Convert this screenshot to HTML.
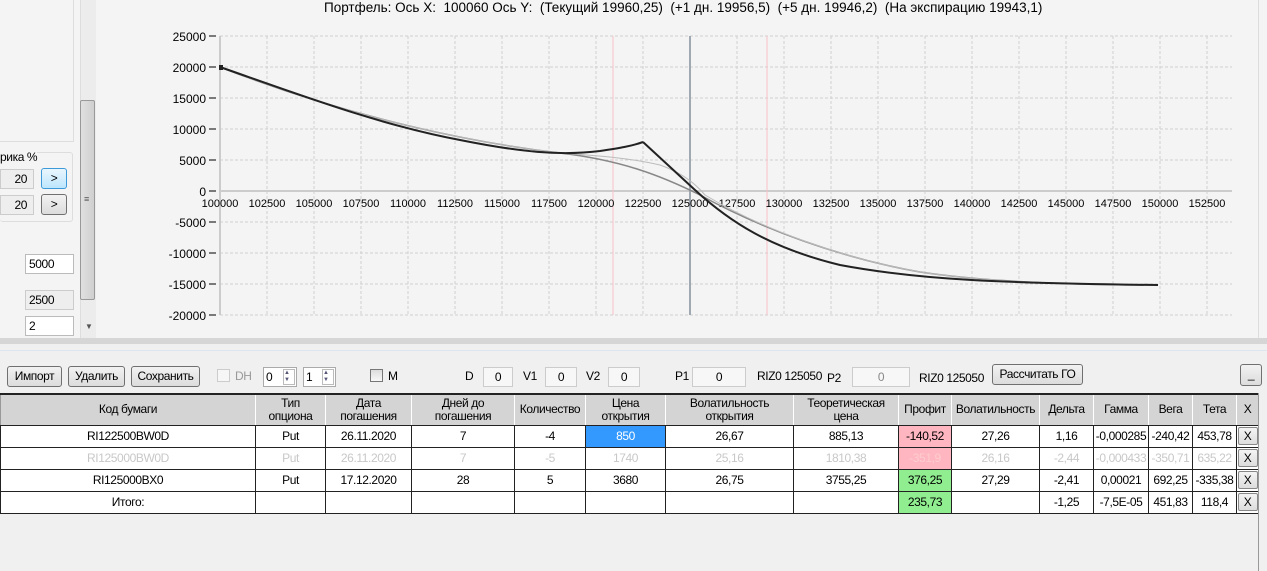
<!DOCTYPE html>
<html><head><meta charset="utf-8"><style>
*{box-sizing:border-box;margin:0;padding:0}
body{width:1267px;height:571px;overflow:hidden;background:#f0f0f0;font-family:"Liberation Sans",sans-serif;font-size:12px;color:#000;position:relative;letter-spacing:-0.4px}
.a{position:absolute}
.btn{position:absolute;height:21px;border:1px solid #707070;border-radius:3px;background:linear-gradient(#f2f2f2,#dcdcdc);font-size:12px;text-align:center;line-height:19px}
.box{position:absolute;height:20px;border:1px solid #ccc;background:#f7f7f7;text-align:center;line-height:18px}
table{position:absolute;left:0;top:393px;border-collapse:collapse;font-size:12px;border-top:2px solid #222;table-layout:fixed}
td{border:1px solid #222;text-align:center;height:22px;padding:0;background:#fff;white-space:nowrap;overflow:hidden}
tr.h td{background:#d4d4d4;height:31px;line-height:13px;border-color:#999 #fff #222 #999}
tr.g td{color:#c8c8c8}
.xb{display:inline-block;width:20px;height:18px;border:1px solid #888;border-radius:2px;background:linear-gradient(#f4f4f4,#ddd);line-height:16px}
</style></head><body>
<div class="a" style="left:0;top:0;width:1267px;height:339px;background:#f4f4f4"></div>
<div class="a" style="left:0;top:0;width:74px;height:142px;border:1px solid #ddd;border-left:none;border-top:none"></div>
<div class="a" style="left:0;top:152px;width:73px;height:70px;border:1px solid #ddd;border-left:none;border-radius:3px"></div>
<div class="a" style="left:0;top:150px;font-size:12px;background:#f4f4f4">рика %</div>
<div class="box" style="left:0;top:169px;width:34px;text-align:right;padding-right:6px;background:#eee">20</div>
<div class="btn" style="left:41px;top:168px;width:26px;border-color:#3c9ad8;background:linear-gradient(#eaf6fd,#bde6fd)">&gt;</div>
<div class="box" style="left:0;top:195px;width:34px;text-align:right;padding-right:6px;background:#eee">20</div>
<div class="btn" style="left:41px;top:194px;width:26px">&gt;</div>
<div class="box" style="left:25px;top:254px;width:49px;background:#fff;text-align:left;padding-left:3px;border-color:#bbb">5000</div>
<div class="box" style="left:25px;top:290px;width:49px;background:#eee;text-align:left;padding-left:3px">2500</div>
<div class="box" style="left:25px;top:316px;width:49px;background:#fff;text-align:left;padding-left:3px;border-color:#bbb">2</div>
<div class="a" style="left:80px;top:0;width:16px;height:338px;background:#ececec;border-left:1px solid #ddd"></div>
<div class="a" style="left:80px;top:100px;width:15px;height:200px;background:linear-gradient(90deg,#e0e0e0,#cfcfcf);border:1px solid #999;border-radius:2px"></div>
<div class="a" style="left:84px;top:194px;font-size:9px;color:#555">≡</div>
<div class="a" style="left:85px;top:322px;font-size:8px;color:#555">▼</div>
<div class="a" style="left:324px;top:0px;font-size:13.5px;letter-spacing:0">Портфель: Ось X:&nbsp; 100060 Ось Y:&nbsp; (Текущий 19960,25)&nbsp; (+1 дн. 19956,5)&nbsp; (+5 дн. 19946,2)&nbsp; (На экспирацию 19943,1)</div>
<svg class="a" style="left:0;top:0;letter-spacing:0" width="1267" height="340" font-family="Liberation Sans" font-size="12">
<g stroke="#d0d0d0" stroke-dasharray="3,2">
<path d="M220 36H1232M220 67H1232M220 98H1232M220 129H1232M220 160H1232M220 222H1232M220 253H1232M220 284H1232M220 315H1232"/>
<path d="M267 36V315M314 36V315M361 36V315M408 36V315M455 36V315M502 36V315M549 36V315M596 36V315M643 36V315M737 36V315M784 36V315M831 36V315M878 36V315M925 36V315M972 36V315M1019 36V315M1066 36V315M1113 36V315M1160 36V315M1207 36V315"/>
</g>
<path d="M220 36V315" stroke="#ccc" stroke-width="2"/>
<path d="M220 191H1232" stroke="#ccc" stroke-width="2"/>
<path d="M613 36V315M767 36V315" stroke="#f8c0c8"/>
<path d="M690 36V315" stroke="#a0a8b2" stroke-width="2"/>
<g stroke="#000"><path d="M209 36H216M209 67H216M209 98H216M209 129H216M209 160H216M209 191H216M209 222H216M209 253H216M209 284H216M209 315H216"/></g>
<g text-anchor="end"><text x="206" y="41">25000</text><text x="206" y="72">20000</text><text x="206" y="103">15000</text><text x="206" y="134">10000</text><text x="206" y="165">5000</text><text x="206" y="196">0</text><text x="206" y="227">-5000</text><text x="206" y="258">-10000</text><text x="206" y="289">-15000</text><text x="206" y="320">-20000</text></g>
<g font-size="11" text-anchor="middle"><text x="220" y="207">100000</text><text x="267" y="207">102500</text><text x="314" y="207">105000</text><text x="361" y="207">107500</text><text x="408" y="207">110000</text><text x="455" y="207">112500</text><text x="502" y="207">115000</text><text x="549" y="207">117500</text><text x="596" y="207">120000</text><text x="643" y="207">122500</text><text x="690" y="207">125000</text><text x="737" y="207">127500</text><text x="784" y="207">130000</text><text x="831" y="207">132500</text><text x="878" y="207">135000</text><text x="925" y="207">137500</text><text x="972" y="207">140000</text><text x="1019" y="207">142500</text><text x="1066" y="207">145000</text><text x="1113" y="207">147500</text><text x="1160" y="207">150000</text><text x="1207" y="207">152500</text></g>
<g fill="none">
<path d="M220 67C330 110 450 140 560 153C620 160 660 175 700 195C760 228 840 258 920 272C1000 284 1100 285 1158 285" stroke="#888" stroke-width="1.5"/>
<path d="M220 67C330 110 450 140 560 153C600 156 630 158 660 165C680 172 695 183 705 195C760 228 840 258 920 272C1000 284 1100 285 1158 285" stroke="#bbb" stroke-width="1"/>
<path d="M220 67C300 95 380 125 460 140C520 152 560 156 600 151C620 148 632 146 643 142" stroke="#222" stroke-width="2"/>
<path d="M643 142L695 190C730 222 770 248 840 265C920 280 1000 283 1158 285" stroke="#222" stroke-width="2"/>
</g>
<rect x="219" y="65" width="4" height="5" fill="#222"/>
</svg>
<div class="a" style="left:1258px;top:0;width:9px;height:338px;border-left:1px solid #ddd;background:#f4f4f4"></div>
<div class="a" style="left:0;top:338px;width:1267px;height:6px;background:#d6d6d6"></div>
<div class="a" style="left:0;top:350px;width:1267px;height:1px;background:#dde6ef"></div>
<div class="btn" style="left:7px;top:366px;width:55px">Импорт</div>
<div class="btn" style="left:68px;top:366px;width:57px">Удалить</div>
<div class="btn" style="left:131px;top:366px;width:69px">Сохранить</div>
<div class="a" style="left:217px;top:369px;width:13px;height:13px;border:1px solid #ccc;background:#f6f6f6"></div>
<div class="a" style="left:235px;top:369px;color:#999">DH</div>
<div class="box" style="left:263px;top:367px;width:34px;text-align:left;padding-left:2px;background:#fff;border-color:#aaa">0<span style="position:absolute;right:1px;top:1px;width:12px;height:16px;border:1px solid #bbb;font-size:6px;line-height:7px;color:#557">▲<br>▼</span></div>
<div class="box" style="left:303px;top:367px;width:33px;text-align:left;padding-left:2px;background:#fff;border-color:#aaa">1<span style="position:absolute;right:1px;top:1px;width:12px;height:16px;border:1px solid #bbb;font-size:6px;line-height:7px;color:#557">▲<br>▼</span></div>
<div class="a" style="left:370px;top:369px;width:13px;height:13px;border:1px solid #777;background:linear-gradient(#ddd,#f8f8f8)"></div>
<div class="a" style="left:388px;top:369px">M</div>
<div class="a" style="left:465px;top:369px">D</div><div class="box" style="left:483px;top:367px;width:30px">0</div>
<div class="a" style="left:523px;top:369px">V1</div><div class="box" style="left:545px;top:367px;width:32px">0</div>
<div class="a" style="left:586px;top:369px">V2</div><div class="box" style="left:608px;top:367px;width:32px">0</div>
<div class="a" style="left:675px;top:369px">P1</div><div class="box" style="left:692px;top:367px;width:54px">0</div>
<div class="a" style="left:757px;top:369px">RIZ0 125050</div>
<div class="a" style="left:827px;top:371px">P2</div><div class="box" style="left:852px;top:367px;width:58px;color:#888">0</div>
<div class="a" style="left:919px;top:371px">RIZ0 125050</div>
<div class="btn" style="left:992px;top:364px;width:91px">Рассчитать ГО</div>
<div class="btn" style="left:1240px;top:364px;width:22px;height:22px">_</div>
<table style="width:1258px">
<colgroup><col style="width:255px"><col style="width:70px"><col style="width:86px"><col style="width:103px"><col style="width:71px"><col style="width:80px"><col style="width:128px"><col style="width:105px"><col style="width:53px"><col style="width:88px"><col style="width:54px"><col style="width:55px"><col style="width:44px"><col style="width:44px"><col style="width:22px"></colgroup>
<tr class="h"><td>Код бумаги</td><td>Тип<br>опциона</td><td>Дата<br>погашения</td><td>Дней до<br>погашения</td><td>Количество</td><td>Цена<br>открытия</td><td>Волатильность<br>открытия</td><td>Теоретическая<br>цена</td><td>Профит</td><td>Волатильность</td><td>Дельта</td><td>Гамма</td><td>Вега</td><td>Тета</td><td>X</td></tr>
<tr><td>RI122500BW0D</td><td>Put</td><td>26.11.2020</td><td>7</td><td>-4</td><td style="background:#3399ff;color:#fff">850</td><td>26,67</td><td>885,13</td><td style="background:#ffb6c1">-140,52</td><td>27,26</td><td>1,16</td><td>-0,000285</td><td>-240,42</td><td>453,78</td><td><span class="xb">X</span></td></tr>
<tr class="g"><td>RI125000BW0D</td><td>Put</td><td>26.11.2020</td><td>7</td><td>-5</td><td>1740</td><td>25,16</td><td>1810,38</td><td style="background:#ffb6c1;color:#fcc">-351,9</td><td>26,16</td><td>-2,44</td><td>-0,000433</td><td>-350,71</td><td>635,22</td><td style="color:#000"><span class="xb">X</span></td></tr>
<tr><td>RI125000BX0</td><td>Put</td><td>17.12.2020</td><td>28</td><td>5</td><td>3680</td><td>26,75</td><td>3755,25</td><td style="background:#90ee90">376,25</td><td>27,29</td><td>-2,41</td><td>0,00021</td><td>692,25</td><td>-335,38</td><td><span class="xb">X</span></td></tr>
<tr><td>Итого:</td><td></td><td></td><td></td><td></td><td></td><td></td><td></td><td style="background:#90ee90">235,73</td><td></td><td>-1,25</td><td>-7,5E-05</td><td>451,83</td><td>118,4</td><td><span class="xb">X</span></td></tr>
</table>
<div class="a" style="left:1258px;top:393px;width:9px;height:178px;border-left:1px solid #999;background:#f0f0f0"></div>
</body></html>
